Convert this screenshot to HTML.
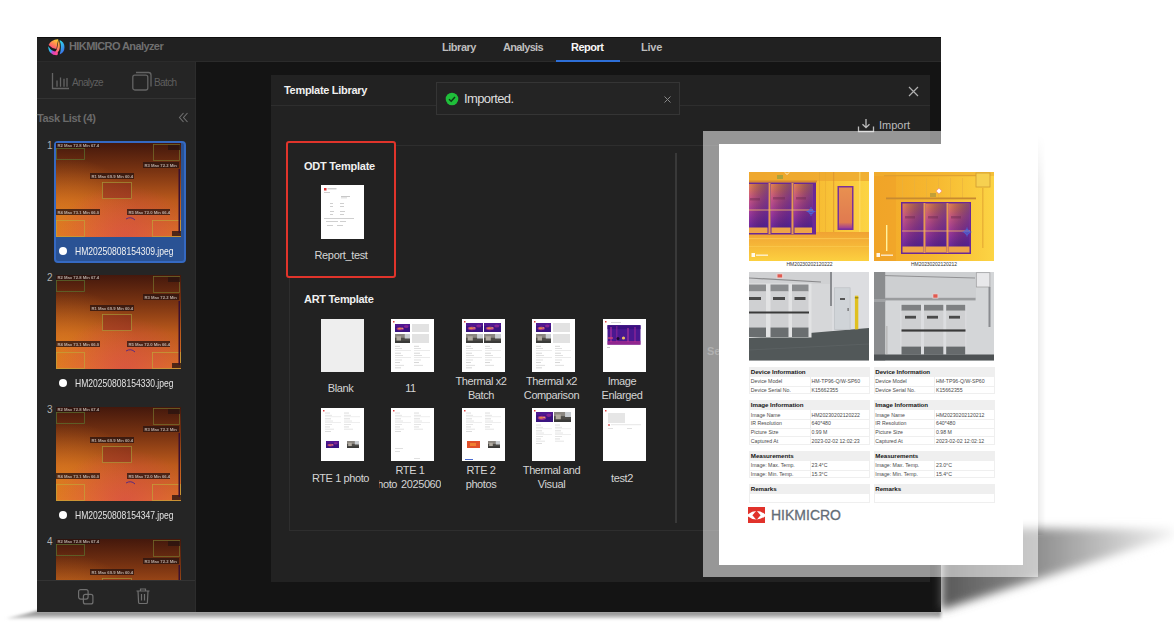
<!DOCTYPE html>
<html><head><meta charset="utf-8">
<style>
*{box-sizing:border-box;margin:0;padding:0}
html,body{width:1174px;height:641px;overflow:hidden;background:#fff}
body{position:relative;font-family:"Liberation Sans",sans-serif}
.a{position:absolute}
.t{position:absolute;white-space:nowrap;line-height:1}
.b{font-weight:bold}
.sx{transform-origin:0 50%}
.thumb{position:absolute;width:43px;height:53px;background:#fff;overflow:hidden}
.lbl{position:absolute;width:62px;text-align:center;font-size:11px;color:#d4d4d4;line-height:14px;overflow:hidden;white-space:nowrap;letter-spacing:-0.4px}
</style></head><body>

<!-- shadow under app window -->
<svg class="a" style="left:0;top:590px" width="1174" height="51">
 <defs><filter id="bl1" x="-5%" y="-100%" width="110%" height="300%"><feGaussianBlur stdDeviation="1.6"/></filter>
 <linearGradient id="sh1" x1="0" y1="0" x2="0" y2="1"><stop offset="0" stop-color="#767676"/><stop offset="1" stop-color="#d4d4d4"/></linearGradient></defs>
 <polygon points="6,28.5 37,21 941,21 941,28.5" fill="url(#sh1)" filter="url(#bl1)"/>
</svg>
<!-- APP WINDOW BG -->
<div class="a" style="left:37px;top:37px;width:904px;height:575px;background:#141414"></div>
<!-- title bar -->
<div class="a" style="left:37px;top:37px;width:904px;height:25px;background:#212121;border-top:1px solid #0f0f0f;border-bottom:1px solid #2b2b2b"></div>
<!-- logo -->
<svg class="a" style="left:45px;top:36px" width="22" height="22" viewBox="0 0 22 22">
 <defs>
  <linearGradient id="lgA" x1="0.8" y1="0" x2="0.2" y2="1"><stop offset="0" stop-color="#ffd030"/><stop offset="0.45" stop-color="#ff8a50"/><stop offset="1" stop-color="#ff3a8a"/></linearGradient>
  <linearGradient id="lgB" x1="0" y1="0" x2="0.3" y2="1"><stop offset="0" stop-color="#30e8f0"/><stop offset="1" stop-color="#3a70e8"/></linearGradient>
  <linearGradient id="lgC" x1="0" y1="0" x2="1" y2="0.5"><stop offset="0" stop-color="#30d8f0"/><stop offset="0.4" stop-color="#3aa8f0"/><stop offset="0.65" stop-color="#d040c8"/><stop offset="1" stop-color="#ff4a90"/></linearGradient>
  <linearGradient id="lgD" x1="0" y1="0" x2="0" y2="1"><stop offset="0" stop-color="#ffc030"/><stop offset="0.5" stop-color="#ff9050"/><stop offset="1" stop-color="#ff4a90"/></linearGradient>
 </defs>
 <circle cx="11.2" cy="11.3" r="7.9" fill="#1c1c1c"/>
 <path d="M14.6,3.9 A7.9,7.9 0 0 1 14.6,18.5 Q17.2,11.3 14.6,3.9Z" fill="url(#lgB)"/>
 <path d="M13.9,3.4 Q15.6,11 14.2,14.2 Q12,18.5 7.5,18.4 Q11.8,15 12.3,11.5 Q13,6.5 13.9,3.4Z" fill="url(#lgD)"/>
 <path d="M3.6,9 Q5.5,4 13.2,3.3 L11.4,13 Q6.5,12.2 3.6,9Z" fill="url(#lgA)"/>
 <path d="M3.4,10.3 A7.9,7.9 0 0 0 12.5,19.1 Q13.5,17.2 12.2,15.6 Q6.5,16 3.4,10.3Z" fill="url(#lgC)"/>
</svg>
<div class="t b" style="left:69px;top:41px;font-size:11px;color:#6f6f6f;letter-spacing:-0.59px">HIKMICRO Analyzer</div>
<!-- nav tabs -->
<div class="t b" style="left:442px;top:42px;font-size:11px;color:#bdbdbd;letter-spacing:-0.47px">Library</div>
<div class="t b" style="left:503px;top:42px;font-size:11px;color:#bdbdbd;letter-spacing:-0.66px">Analysis</div>
<div class="t b" style="left:571px;top:42px;font-size:11px;color:#f8f8f8;letter-spacing:-0.49px">Report</div>
<div class="t b" style="left:641px;top:42px;font-size:11px;color:#bdbdbd;letter-spacing:-0.25px">Live</div>
<div class="a" style="left:556px;top:60px;width:64px;height:2px;background:#2d6ed6"></div>

<!-- SIDEBAR -->
<div class="a" style="left:37px;top:62px;width:159px;height:550px;background:#252525;border-right:1px solid #2c2c2c"></div>
<div class="a" style="left:37px;top:98px;width:159px;height:1px;background:#333"></div>
<!-- analyze icon -->
<svg class="a" style="left:51px;top:72px" width="20" height="18" viewBox="0 0 20 18" fill="none" stroke="#646464" stroke-width="1.3">
 <path d="M1.5,1 V16.5 H18"/>
 <path d="M6,8.5 V14.8 M9.5,5.5 V14.8 M13,6.7 V14.8 M16,6 V14.8"/>
</svg>
<div class="t" style="left:72px;top:77.5px;font-size:10px;color:#5f5f5f;letter-spacing:-0.65px">Analyze</div>
<!-- batch icon -->
<svg class="a" style="left:131px;top:71px" width="22" height="21" viewBox="0 0 22 21" fill="none" stroke="#646464" stroke-width="1.3">
 <rect x="1.8" y="4.2" width="15" height="14.8" rx="2"/>
 <path d="M5,1.5 H17.5 Q20,1.5 20,4 V15.5"/>
</svg>
<div class="t" style="left:154px;top:77.5px;font-size:10px;color:#5f5f5f;letter-spacing:-0.6px">Batch</div>
<div class="t b" style="left:37px;top:113px;font-size:11px;color:#6a6a6a;letter-spacing:-0.38px">Task List (4)</div>
<svg class="a" style="left:178px;top:112px" width="11" height="11" viewBox="0 0 11 11" fill="none" stroke="#707070" stroke-width="1.1">
 <path d="M5.5,1 L1.5,5.5 L5.5,10 M9.5,1 L5.5,5.5 L9.5,10"/>
</svg>
<!-- thermal symbol defs -->
<svg class="a" width="0" height="0" style="left:0;top:0">
 <defs>
  <linearGradient id="thg" x1="0" y1="0" x2="0" y2="1">
   <stop offset="0" stop-color="#44180c"/>
   <stop offset="0.3" stop-color="#7a3412"/>
   <stop offset="0.62" stop-color="#bc5a1c"/>
   <stop offset="1" stop-color="#dc7424"/>
  </linearGradient>
  <radialGradient id="thp" cx="0.55" cy="1" r="0.55">
   <stop offset="0" stop-color="#d84450" stop-opacity="0.6"/>
   <stop offset="1" stop-color="#e23c62" stop-opacity="0"/>
  </radialGradient>
  <radialGradient id="tho" cx="0.05" cy="0.75" r="0.6">
   <stop offset="0" stop-color="#e88a20" stop-opacity="0.55"/>
   <stop offset="1" stop-color="#f08a20" stop-opacity="0"/>
  </radialGradient>
  <symbol id="therm" viewBox="0 0 125 94">
   <rect width="125" height="94" fill="url(#thg)"/>
   <rect width="125" height="94" fill="url(#tho)"/>
   <rect width="125" height="94" fill="url(#thp)"/>
   <g fill="none" stroke="#a49a3c" stroke-width="0.8" opacity="0.8">
    <rect x="0.5" y="5.5" width="28" height="11" stroke="#5a7a34"/>
    <rect x="97.5" y="1.5" width="26" height="16" stroke="#7a7a30"/>
    <rect x="46.5" y="39.5" width="29" height="16"/>
    <rect x="0.5" y="77.5" width="28" height="16" stroke="#c0a83a"/>
    <rect x="96.5" y="77.5" width="28" height="16" stroke="#c0a83a"/>
   </g>
   <rect x="47" y="40" width="28" height="15" fill="#8a2a20" opacity="0.5"/>
   <g fill="#2a1410" opacity="0.78">
    <rect x="0" y="0" width="44" height="5"/>
    <rect x="112" y="2" width="12" height="5"/>
    <rect x="87" y="19" width="36" height="6"/>
    <rect x="34" y="30" width="44" height="6"/>
    <rect x="0" y="66" width="44" height="6"/>
    <rect x="71" y="66" width="43" height="6"/>
    <rect x="116" y="88" width="9" height="5"/>
   </g>
   <g fill="#e8e0d8" opacity="0.7" font-family="Liberation Sans" font-size="4.2" font-weight="bold">
    <text x="1.5" y="4.2">R2 Max 72.8 Min 67.4</text>
    <text x="88.5" y="23.8">R3 Max 72.2 Min</text>
    <text x="35.5" y="34.8">R1 Max 69.9 Min 60.4</text>
    <text x="1.5" y="70.8">R4 Max 73.1 Min 66.0</text>
    <text x="72.5" y="70.8">R5 Max 72.0 Min 66.4</text>
   </g>
   <rect x="122.5" y="26" width="1.5" height="64" fill="#3a1030"/>
   <path d="M70,76 Q75,73 79,77" stroke="#5a2a80" stroke-width="1" fill="none"/>
  </symbol>
 </defs>
</svg>

<!-- sidebar list (clipped) -->
<div class="a" style="left:37px;top:136px;width:158px;height:444px;overflow:hidden">
 <!-- card 1 selected -->
 <div class="a" style="left:16.5px;top:4.5px;width:132px;height:122.5px;border:2px solid #3569c2;border-radius:4px;background:#2a5294"></div>
 <svg class="a" style="left:19px;top:7px" width="125" height="94"><use href="#therm"/></svg>
 <div class="t" style="left:10px;top:5px;font-size:10px;color:#b0b0b0">1</div>
 <div class="a" style="left:22px;top:111px;width:8px;height:8px;border-radius:50%;background:#fff"></div>
 <div class="t sx" style="left:38px;top:110px;font-size:10.5px;color:#f2f2f2;transform:scaleX(0.815)">HM20250808154309.jpeg</div>

 <!-- card 2 -->
 <svg class="a" style="left:19px;top:139px" width="125" height="94"><use href="#therm"/></svg>
 <div class="t" style="left:10px;top:137px;font-size:10px;color:#b0b0b0">2</div>
 <div class="a" style="left:22px;top:242.5px;width:8px;height:8px;border-radius:50%;background:#fff"></div>
 <div class="t sx" style="left:38px;top:241.5px;font-size:10.5px;color:#e4e4e4;transform:scaleX(0.815)">HM20250808154330.jpeg</div>

 <!-- card 3 -->
 <svg class="a" style="left:19px;top:271px" width="125" height="94"><use href="#therm"/></svg>
 <div class="t" style="left:10px;top:269px;font-size:10px;color:#b0b0b0">3</div>
 <div class="a" style="left:22px;top:374.5px;width:8px;height:8px;border-radius:50%;background:#fff"></div>
 <div class="t sx" style="left:38px;top:373.5px;font-size:10.5px;color:#e4e4e4;transform:scaleX(0.815)">HM20250808154347.jpeg</div>

 <!-- card 4 -->
 <svg class="a" style="left:19px;top:403px" width="125" height="94"><use href="#therm"/></svg>
 <div class="t" style="left:10px;top:401px;font-size:10px;color:#b0b0b0">4</div>
</div>
<!-- sidebar bottom bar -->
<div class="a" style="left:37px;top:580px;width:158px;height:1px;background:#333"></div>
<svg class="a" style="left:76.5px;top:587.5px" width="18" height="18" viewBox="0 0 18 18" fill="none" stroke="#707070" stroke-width="1.2">
 <rect x="1.6" y="1.6" width="9.5" height="9.5" rx="2"/>
 <rect x="6.4" y="6.4" width="9.5" height="9.5" rx="2"/>
</svg>
<svg class="a" style="left:135px;top:587px" width="16" height="18" viewBox="0 0 16 18" fill="none" stroke="#707070" stroke-width="1.2">
 <path d="M1.5,4 H14.5 M5.5,4 V2 H10.5 V4 M3,4 L3.6,15.5 Q3.7,16.5 4.7,16.5 H11.3 Q12.3,16.5 12.4,15.5 L13,4 M6.5,7 V13.5 M9.5,7 V13.5"/>
</svg>
<!-- MODAL -->
<div class="a" style="left:271px;top:75px;width:659px;height:507px;background:#222"></div>
<div class="a" style="left:271px;top:105px;width:659px;height:1px;background:#2e2e2e"></div>
<div class="t b" style="left:284px;top:85px;font-size:11px;color:#f0f0f0;letter-spacing:-0.3px">Template Library</div>
<svg class="a" style="left:908px;top:86px" width="11" height="11" viewBox="0 0 11 11" stroke="#b0b0b0" stroke-width="1.2"><path d="M1,1 L10,10 M10,1 L1,10"/></svg>
<!-- toast -->
<div class="a" style="left:436px;top:82px;width:244px;height:32.5px;background:#242424;border:1px solid #353535"></div>
<svg class="a" style="left:445px;top:92px" width="14" height="14" viewBox="0 0 14 14">
 <circle cx="7" cy="7" r="6.3" fill="#1fbf3a"/>
 <path d="M4,7.2 L6.2,9.2 L10,5" stroke="#0e3a16" stroke-width="1.5" fill="none"/>
</svg>
<div class="t" style="left:464px;top:92px;font-size:13px;color:#dedede;letter-spacing:-0.61px">Imported.</div>
<svg class="a" style="left:663.5px;top:95.5px" width="7" height="7" viewBox="0 0 7 7" stroke="#888" stroke-width="1"><path d="M0.5,0.5 L6.5,6.5 M6.5,0.5 L0.5,6.5"/></svg>
<!-- import -->
<svg class="a" style="left:857px;top:118px" width="18" height="15" viewBox="0 0 18 15" fill="none" stroke="#bdbdbd" stroke-width="1.3">
 <path d="M9,1 V9.5 M5.5,6.2 L9,9.6 L12.5,6.2 M1.5,8.5 V13.5 H16.5 V8.5"/>
</svg>
<div class="t" style="left:879px;top:120px;font-size:11px;color:#bcbcbc">Import</div>

<!-- inner frame lines -->
<div class="a" style="left:289px;top:145px;width:641px;height:386px;border-left:1px solid #2e2e2e;border-top:1px solid #2e2e2e;border-bottom:1px solid #2e2e2e"></div>
<div class="a" style="left:675px;top:153px;width:1.5px;height:370px;background:#393939"></div>

<!-- ODT -->
<div class="a" style="left:286px;top:140.5px;width:110px;height:137px;border:2px solid #e0342b;border-radius:3px;background:#222"></div>
<div class="t b" style="left:304px;top:161px;font-size:11px;color:#f0f0f0;letter-spacing:-0.23px">ODT Template</div>
<div class="thumb" style="left:321px;top:185px;width:43px;height:54px">
 <svg width="43" height="54" viewBox="0 0 43 54">
  <rect x="3" y="3" width="2.5" height="2.5" fill="#d33"/>
  <g fill="#bbb"><rect x="6.5" y="3.3" width="9" height="1"/><rect x="3" y="7" width="6" height="0.7"/><rect x="20" y="11" width="9" height="0.8"/><rect x="20" y="12.6" width="6" height="0.6"/>
  <rect x="9" y="18" width="3" height="0.7"/><rect x="19" y="18" width="4" height="0.7"/><rect x="9" y="21" width="3" height="0.7"/><rect x="19" y="21" width="4" height="0.7"/>
  <rect x="9" y="26" width="4" height="0.7"/><rect x="19" y="26" width="5" height="0.7"/><rect x="9" y="29" width="3" height="0.7"/><rect x="19" y="29" width="4" height="0.7"/>
  <rect x="3" y="33" width="30" height="0.7"/><rect x="5" y="36" width="12" height="0.7"/><rect x="19" y="36" width="6" height="0.7"/>
  <rect x="6" y="40" width="6" height="0.7"/><rect x="16" y="40" width="6" height="0.7"/></g>
 </svg>
</div>
<div class="t" style="left:314.5px;top:249.5px;font-size:11px;color:#d6d6d6;letter-spacing:-0.35px">Report_test</div>

<!-- ART -->
<div class="t b" style="left:304px;top:294px;font-size:11px;color:#f0f0f0;letter-spacing:-0.3px">ART Template</div>
<svg class="a" width="0" height="0" style="left:0;top:0">
 <defs>
  <linearGradient id="pg" x1="0" y1="0" x2="1" y2="1">
   <stop offset="0" stop-color="#4a1890"/><stop offset="0.5" stop-color="#8a2aa8"/><stop offset="1" stop-color="#3a1280"/>
  </linearGradient>
  <symbol id="pth" viewBox="0 0 20 12" preserveAspectRatio="none">
   <rect width="20" height="12" fill="#3a1480"/>
   <rect x="0" y="0" width="20" height="4" fill="#5a1a98" opacity="0.7"/>
   <ellipse cx="7" cy="7" rx="5" ry="2.5" fill="#c03a90" opacity="0.75"/>
   <ellipse cx="15" cy="4" rx="3" ry="2" fill="#a02a98" opacity="0.7"/>
   <ellipse cx="6" cy="7" rx="2.5" ry="1.2" fill="#f09040" opacity="0.85"/>
   <circle cx="9.5" cy="6.5" r="0.9" fill="#ffd060"/>
  </symbol>
  <symbol id="vis" viewBox="0 0 20 12" preserveAspectRatio="none">
   <rect width="20" height="12" fill="#4e4c48"/>
   <rect x="0" y="0" width="20" height="5" fill="#8a8680"/>
   <rect x="13" y="0" width="7" height="6" fill="#c8ccd0"/>
   <rect x="2" y="3" width="6" height="6" fill="#b0aaa0"/>
   <rect x="0" y="9" width="20" height="3" fill="#3a3a38"/>
  </symbol>
  <symbol id="lines" viewBox="0 0 43 30" preserveAspectRatio="none">
   <g fill="#c4c4c4">
    <rect x="4" y="1" width="5" height="0.8"/><rect x="23" y="1" width="5" height="0.8"/>
    <rect x="4" y="4" width="7" height="0.6"/><rect x="23" y="4" width="7" height="0.6"/>
    <rect x="4" y="6.5" width="16" height="0.4"/><rect x="23" y="6.5" width="16" height="0.4"/>
    <rect x="4" y="9" width="6" height="0.8"/><rect x="23" y="9" width="6" height="0.8"/>
    <rect x="4" y="12" width="8" height="0.6"/><rect x="23" y="12" width="8" height="0.6"/>
    <rect x="4" y="14.5" width="16" height="0.4"/><rect x="23" y="14.5" width="16" height="0.4"/>
    <rect x="4" y="17" width="7" height="0.6"/><rect x="23" y="17" width="7" height="0.6"/>
    <rect x="4" y="20" width="5" height="0.8"/><rect x="23" y="20" width="5" height="0.8"/>
    <rect x="4" y="23" width="9" height="0.6"/><rect x="23" y="23" width="9" height="0.6"/>
    <rect x="4" y="26" width="6" height="0.8"/>
   </g>
  </symbol>
 </defs>
</svg>
<!-- row 1 -->
<div class="thumb" style="left:321px;top:319px;background:#eeeeee"></div>
<div class="thumb" style="left:391px;top:319px"><svg width="43" height="53">
 <rect x="2" y="2" width="1.5" height="1.5" fill="#d44"/>
 <svg x="4" y="5" width="15" height="8"><use href="#pth"/></svg><rect x="21" y="5" width="17" height="8" fill="#e2e2e2"/>
 <svg x="4" y="15" width="15" height="9"><use href="#vis"/></svg><rect x="21" y="15" width="17" height="9" fill="#e2e2e2"/>
 <svg x="0" y="26" width="43" height="26"><use href="#lines"/></svg></svg></div>
<div class="thumb" style="left:461.5px;top:319px"><svg width="43" height="53">
 <rect x="2" y="2" width="1.5" height="1.5" fill="#d44"/>
 <svg x="4" y="4" width="17" height="9"><use href="#pth"/></svg><svg x="22" y="4" width="17" height="9"><use href="#pth"/></svg>
 <svg x="4" y="15" width="17" height="9"><use href="#vis"/></svg><svg x="22" y="15" width="17" height="9"><use href="#vis"/></svg>
 <svg x="0" y="26" width="43" height="26"><use href="#lines"/></svg></svg></div>
<div class="thumb" style="left:532px;top:319px"><svg width="43" height="53">
 <rect x="2" y="2" width="1.5" height="1.5" fill="#d44"/>
 <svg x="4" y="4" width="15" height="9"><use href="#pth"/></svg><rect x="21" y="4" width="17" height="9" fill="#e2e2e2"/>
 <svg x="4" y="15" width="15" height="9"><use href="#vis"/></svg><rect x="21" y="15" width="17" height="9" fill="#e2e2e2"/>
 <svg x="0" y="26" width="43" height="26"><use href="#lines"/></svg></svg></div>
<div class="thumb" style="left:602.5px;top:319px"><svg width="43" height="53">
 <rect x="2" y="2" width="1.5" height="1.5" fill="#d44"/><rect x="8" y="3" width="10" height="0.6" fill="#bbb"/>
 <rect x="4.5" y="6.2" width="33" height="19.5" fill="#4a1890"/>
 <rect x="4.5" y="6.2" width="33" height="4" fill="#3a1080"/>
 <rect x="7" y="8" width="2" height="15" fill="#b030a0" opacity="0.6"/><rect x="13" y="7" width="1.5" height="16" fill="#a02898" opacity="0.5"/><rect x="24" y="9" width="2" height="14" fill="#b83aa0" opacity="0.5"/><rect x="31" y="8" width="2" height="15" fill="#a02898" opacity="0.5"/>
 <rect x="4.5" y="22" width="33" height="3.7" fill="#c03090" opacity="0.6"/>
 <circle cx="20.5" cy="19" r="1.6" fill="#f0c060"/><circle cx="15" cy="19.5" r="1.5" fill="#1a0a30"/><rect x="5" y="18" width="5" height="2" fill="#e04a70" opacity="0.6"/>
 <rect x="4" y="28" width="3" height="0.8" fill="#bbb"/></svg></div>
<div class="lbl" style="left:309.5px;top:381px">Blank</div>
<div class="lbl" style="left:379.5px;top:381px">11</div>
<div class="lbl" style="left:450.0px;top:374px">Thermal x2<br>Batch</div>
<div class="lbl" style="left:520.5px;top:374px">Thermal x2<br>Comparison</div>
<div class="lbl" style="left:591.0px;top:374px">Image<br>Enlarged</div>
<!-- row 2 -->
<div class="thumb" style="left:321px;top:408px"><svg width="43" height="53">
 <rect x="2" y="2" width="1.5" height="1.5" fill="#d44"/>
 <svg x="0" y="4" width="43" height="22"><use href="#lines"/></svg>
 <svg x="5" y="33" width="13" height="7"><use href="#pth"/></svg><svg x="26" y="33" width="12" height="7"><use href="#vis"/></svg></svg></div>
<div class="thumb" style="left:391px;top:408px"><svg width="43" height="53">
 <rect x="2" y="2" width="1.5" height="1.5" fill="#d44"/>
 <svg x="0" y="4" width="43" height="22"><use href="#lines"/></svg>
 <rect x="4" y="40" width="8" height="0.6" fill="#ccc"/><rect x="4" y="43" width="5" height="0.6" fill="#ccc"/><rect x="23" y="50" width="6" height="0.6" fill="#ccc"/></svg></div>
<div class="thumb" style="left:461.5px;top:408px"><svg width="43" height="53">
 <rect x="2" y="2" width="1.5" height="1.5" fill="#d44"/>
 <svg x="0" y="4" width="43" height="22"><use href="#lines"/></svg>
 <rect x="5" y="33" width="13" height="7" fill="#e0502a"/><rect x="8" y="35" width="6" height="3" fill="#f08030"/><svg x="26" y="33" width="12" height="7"><use href="#vis"/></svg>
 <rect x="3" y="51" width="8" height="1" fill="#4a6ad0"/></svg></div>
<div class="thumb" style="left:532px;top:408px"><svg width="43" height="53">
 <rect x="2" y="2" width="1.5" height="1.5" fill="#d44"/>
 <svg x="4" y="4" width="17" height="10"><use href="#pth"/></svg><svg x="22" y="4" width="17" height="10"><use href="#vis"/></svg>
 <svg x="0" y="16" width="43" height="22"><use href="#lines"/></svg></svg></div>
<div class="thumb" style="left:602.5px;top:408px"><svg width="43" height="53">
 <rect x="2" y="2" width="1.5" height="1.5" fill="#d44"/>
 <rect x="5" y="5" width="17" height="10" fill="#e6e6e6"/>
 <circle cx="6" cy="17" r="1" fill="#d66"/><rect x="8" y="16.6" width="30" height="0.5" fill="#ccc"/>
 <rect x="5" y="20" width="5" height="0.6" fill="#ccc"/><rect x="24" y="20" width="5" height="0.6" fill="#ccc"/></svg></div>
<div class="lbl" style="left:309.5px;top:470.5px">RTE 1 photo</div>
<div class="lbl" style="left:379.0px;top:463px">RTE 1<br><span style="display:inline-block;width:120px;margin-left:-7.5px;text-align:left;padding-left:0">photo<span style="margin-left:4px">20250604</span></span></div>
<div class="lbl" style="left:450.0px;top:463px">RTE 2<br>photos</div>
<div class="lbl" style="left:520.5px;top:463px">Thermal and<br>Visual</div>
<div class="lbl" style="left:591.0px;top:470.5px">test2</div>
<!-- DOCUMENT OVERLAY SHADOW -->
<svg class="a" style="left:880px;top:480px" width="294" height="161">
 <defs><filter id="bl2" x="-30%" y="-50%" width="160%" height="200%"><feGaussianBlur stdDeviation="5"/></filter>
 <linearGradient id="shg" x1="0" y1="0" x2="1" y2="0"><stop offset="0" stop-color="#585858"/><stop offset="0.35" stop-color="#848484"/><stop offset="0.75" stop-color="#c8c8c8"/><stop offset="1" stop-color="#f4f4f4"/></linearGradient></defs>
 <polygon points="61,48 294,49 294,56 61,130" fill="url(#shg)" filter="url(#bl2)"/>
</svg>
<div class="t b" style="left:707px;top:346px;font-size:11px;color:#5a5a5a">Se</div>
<div class="a" style="left:1038px;top:135px;width:8px;height:400px;background:linear-gradient(90deg,rgba(0,0,0,0.07),rgba(0,0,0,0));-webkit-mask-image:linear-gradient(180deg,transparent 0,#000 50px,#000 100%)"></div>
<!-- frame -->
<div class="a" style="left:703px;top:131px;width:335px;height:446px;background:rgba(255,255,255,0.53)"></div>
<!-- page -->
<div class="a" id="page" style="left:719px;top:144px;width:304px;height:421px;background:#fff;overflow:hidden"><div class="a" style="left:0;top:-1px;width:304px;height:422px">
 <svg class="a" style="left:0;top:0" width="0" height="0"><defs>
  <linearGradient id="dg" x1="0" y1="0" x2="0" y2="1"><stop offset="0" stop-color="#e48252"/><stop offset="0.3" stop-color="#cc5a84"/><stop offset="0.65" stop-color="#a03a9c"/><stop offset="1" stop-color="#6a28a0"/></linearGradient><linearGradient id="dg3" x1="0" y1="0" x2="0" y2="1"><stop offset="0" stop-color="#e89050"/><stop offset="0.85" stop-color="#e07a50"/><stop offset="1" stop-color="#9a3a9a"/></linearGradient>
  <linearGradient id="dg2" x1="0" y1="0" x2="1" y2="0"><stop offset="0" stop-color="#000" stop-opacity="0"/><stop offset="1" stop-color="#3a1a8a" stop-opacity="0.55"/></linearGradient>
  <linearGradient id="ybg" x1="0" y1="0" x2="1" y2="0"><stop offset="0" stop-color="#f2a828"/><stop offset="0.5" stop-color="#f6b830"/><stop offset="1" stop-color="#fcd444"/></linearGradient>
  <linearGradient id="flr" x1="0" y1="0" x2="0" y2="1"><stop offset="0" stop-color="#f0a232"/><stop offset="1" stop-color="#fcd040"/></linearGradient>
 </defs></svg>
 <!-- thermal 1 -->
 <svg class="a" style="left:30px;top:28.5px" width="120" height="89" viewBox="0 0 120 89">
  <rect width="120" height="89" fill="url(#ybg)"/>
  <rect x="0" y="0" width="120" height="9" fill="#eea830" opacity="0.8"/>
  <rect x="70" y="0" width="1" height="60" fill="#e0a030" opacity="0.6"/><rect x="76" y="0" width="1" height="60" fill="#e8a830" opacity="0.5"/><rect x="84" y="0" width="1.2" height="60" fill="#d89030" opacity="0.6"/><rect x="110" y="0" width="1.5" height="62" fill="#ffe070" opacity="0.6"/>
  <rect y="60" width="120" height="29" fill="url(#flr)"/>
  <rect x="0" y="66" width="120" height="1.2" fill="#ffd860" opacity="0.5"/><rect x="0" y="74" width="120" height="1" fill="#ffd860" opacity="0.4"/>
  <rect x="0" y="8.5" width="68" height="2" fill="#d88a30"/>
  <rect x="0" y="10.5" width="67" height="52" fill="#6a2896"/>
  <rect x="0" y="12" width="19" height="44" fill="url(#dg)"/><rect x="0" y="12" width="19" height="44" fill="url(#dg2)"/>
  <rect x="22" y="12" width="20" height="44" fill="url(#dg)"/><rect x="22" y="12" width="20" height="44" fill="url(#dg2)"/>
  <rect x="45" y="12" width="18.5" height="44" fill="url(#dg)"/><rect x="45" y="12" width="18.5" height="44" fill="url(#dg2)"/>
  <rect x="19.5" y="11" width="2" height="51" fill="#e89850"/><rect x="42.5" y="11" width="2" height="51" fill="#e89850"/>
  <rect x="0" y="37.5" width="64" height="1" fill="#f0b070" opacity="0.85"/>
  <rect x="0" y="55.5" width="18.5" height="5.5" fill="#eea448"/><rect x="22.5" y="55.5" width="19" height="5.5" fill="#eea448"/><rect x="45.5" y="55.5" width="17.5" height="5.5" fill="#eea448"/>
  <rect x="1" y="26" width="10" height="2.5" fill="#6a2a50" opacity="0.45"/><rect x="24" y="25" width="12" height="2.5" fill="#6a2a50" opacity="0.45"/><rect x="47" y="25" width="10" height="2.5" fill="#6a2a50" opacity="0.45"/>
  <rect x="88.5" y="14" width="16" height="44" fill="#7a3098"/><rect x="90" y="15.5" width="13" height="41" fill="url(#dg3)"/>
  <circle cx="62" cy="39.5" r="2.3" fill="none" stroke="#4a6ae0" stroke-width="1"/><path d="M57.5,39.5 H66.5 M62,35 V44" stroke="#4a6ae0" stroke-width="0.8"/>
  <rect x="28" y="3" width="6" height="4" fill="#90a040" opacity="0.7"/><path d="M36,0.5 L38,2.5 L40,0.5" stroke="#fff" stroke-width="0.8" fill="none"/>
  <rect x="2.5" y="81" width="3.5" height="4" fill="#fff" opacity="0.9"/><rect x="7" y="82.5" width="12" height="1.4" fill="#fff" opacity="0.75"/>
 </svg>
 <!-- thermal 2 -->
 <svg class="a" style="left:154.5px;top:28.5px" width="120" height="89" viewBox="0 0 120 89">
  <rect width="120" height="89" fill="url(#ybg)"/>
  <rect x="0" y="0" width="22" height="89" fill="#eea028" opacity="0.55"/>
  <rect x="0" y="0" width="120" height="4" fill="#f0b030" opacity="0.6"/>
  <rect x="10" y="3" width="95" height="1.2" fill="#d89a30" opacity="0.7"/>
  <rect x="28" y="6" width="1" height="20" fill="#e8b040" opacity="0.6"/><rect x="40" y="6" width="1" height="20" fill="#e8b040" opacity="0.6"/><rect x="52" y="6" width="1" height="20" fill="#e8b040" opacity="0.6"/><rect x="64" y="6" width="1" height="20" fill="#e8b040" opacity="0.6"/><rect x="76" y="6" width="1" height="20" fill="#e8b040" opacity="0.6"/><rect x="88" y="6" width="1" height="20" fill="#e8b040" opacity="0.6"/>
  <rect x="12" y="25.5" width="90" height="1.8" fill="#c88a30"/>
  <rect x="102" y="1" width="14" height="14" fill="#f6d050" stroke="#d09a30" stroke-width="0.8"/>
  <rect x="108" y="16" width="1.5" height="60" fill="#e0a030" opacity="0.6"/>
  <rect x="27" y="30" width="70" height="52" fill="#6a2896"/>
  <rect x="28.5" y="31.5" width="21" height="44" fill="url(#dg)"/><rect x="28.5" y="31.5" width="21" height="44" fill="url(#dg2)"/>
  <rect x="51.5" y="31.5" width="21" height="44" fill="url(#dg)"/><rect x="51.5" y="31.5" width="21" height="44" fill="url(#dg2)"/>
  <rect x="74.5" y="31.5" width="21" height="44" fill="url(#dg)"/><rect x="74.5" y="31.5" width="21" height="44" fill="url(#dg2)"/>
  <rect x="49.5" y="31" width="2" height="50" fill="#e89850"/><rect x="72.5" y="31" width="2" height="50" fill="#e89850"/>
  <rect x="28" y="58.5" width="68" height="1" fill="#f0b070" opacity="0.85"/>
  <rect x="28.5" y="74.5" width="21" height="6" fill="#eea448"/><rect x="51.5" y="74.5" width="21" height="6" fill="#eea448"/><rect x="74.5" y="74.5" width="21" height="6" fill="#eea448"/>
  <rect x="31" y="44" width="10" height="2.5" fill="#6a2a50" opacity="0.45"/><rect x="54" y="44" width="10" height="2.5" fill="#6a2a50" opacity="0.45"/><rect x="77" y="44" width="10" height="2.5" fill="#6a2a50" opacity="0.45"/>
  <rect x="12" y="53" width="1.4" height="26" fill="#fff2a0"/>
  <rect x="56" y="21" width="6" height="4" fill="#a09040" opacity="0.6"/><rect x="63" y="17" width="4" height="4" fill="#fff" stroke="#f08080" stroke-width="0.6" transform="rotate(45 65 19)"/>
  <circle cx="93" cy="60" r="2.3" fill="none" stroke="#4a6ae0" stroke-width="1"/><path d="M88.5,60 H97.5 M93,55.5 V64.5" stroke="#4a6ae0" stroke-width="0.8"/>
  <rect x="2.5" y="81" width="3.5" height="4" fill="#fff" opacity="0.9"/><rect x="7" y="82.5" width="12" height="1.4" fill="#fff" opacity="0.75"/>
 </svg>
 <div class="t" style="left:67.5px;top:119px;font-size:5px;color:#333;letter-spacing:-0.05px">HM20230202120222</div>
 <div class="t" style="left:192px;top:119px;font-size:5px;color:#333;letter-spacing:-0.05px">HM20230202120212</div>
 <!-- visual 1 -->
 <svg class="a" style="left:30px;top:129px" width="120" height="88.5" viewBox="0 0 120 88.5">
  <rect width="120" height="88.5" fill="#d6d7d9"/>
  <rect x="0" y="0" width="82" height="12" fill="#d0d1d3"/>
  <rect x="83" y="0" width="37" height="60" fill="#dcdde0"/>
  <path d="M0,66 L120,56 V88.5 H0Z" fill="#525859"/>
  <path d="M0,78 L120,72" stroke="#5e6466" stroke-width="0.7"/>
  <path d="M0,6 L72,10" stroke="#8a8a8c" stroke-width="1.2"/>
  <rect x="27.3" y="1.4" width="7" height="5" fill="#e8d0d0"/><rect x="28.5" y="2.3" width="4.6" height="3.2" fill="#e05a50"/>
  <rect x="81" y="0" width="2" height="34" fill="#8a8c90"/>
  <rect x="0" y="11.5" width="62.5" height="54" fill="#e2e3e4"/>
  <rect x="0" y="12.5" width="17" height="7" fill="#8a8c8e"/><rect x="21.5" y="12.5" width="18" height="7" fill="#8a8c8e"/><rect x="43" y="12.5" width="16.5" height="7" fill="#8a8c8e"/>
  <rect x="0" y="19.5" width="17" height="36" fill="#cfd0d2"/><rect x="21.5" y="19.5" width="18" height="36" fill="#cfd0d2"/><rect x="43" y="19.5" width="16.5" height="36" fill="#cfd0d2"/>
  <rect x="0" y="55.5" width="17" height="9.5" fill="#6a6e70"/><rect x="21.5" y="55.5" width="18" height="9.5" fill="#6a6e70"/><rect x="43" y="55.5" width="16.5" height="9.5" fill="#6a6e70"/>
  <rect x="0" y="25" width="12" height="3" fill="#4a4a4a"/><rect x="24" y="25" width="12" height="3" fill="#4a4a4a"/><rect x="45.5" y="25" width="11" height="3" fill="#4a4a4a"/>
  <rect x="0" y="39.5" width="60" height="2" fill="#3a3a3a"/>
  <rect x="85.4" y="15.8" width="15.7" height="41.6" fill="#d0d4d8" stroke="#b8bcc0" stroke-width="0.6"/>
  <rect x="91" y="26" width="5" height="2" fill="#555"/><rect x="98.5" y="36" width="1.2" height="3" fill="#666"/>
  <rect x="105.9" y="23.7" width="3.4" height="33.7" fill="#e0c020"/><rect x="105.9" y="25" width="3.4" height="1.5" fill="#a08a10"/>
 </svg>
 <!-- visual 2 -->
 <svg class="a" style="left:154.5px;top:129px" width="120" height="88.5" viewBox="0 0 120 88.5">
  <rect width="120" height="88.5" fill="#d4d6d8"/>
  <rect x="11" y="0" width="91" height="26" fill="#cdcfd1"/>
  <rect x="0" y="0" width="11.2" height="88.5" fill="#8a8c8e"/>
  <rect x="0" y="27" width="11.2" height="3" fill="#a0a2a4"/>
  <path d="M11,3.6 L101,6" stroke="#8a8a8c" stroke-width="0.9"/>
  <rect x="102.3" y="0.7" width="13.6" height="14.3" fill="#e8e8ea" stroke="#9a9a9c" stroke-width="0.7"/>
  <rect x="114.5" y="15" width="2" height="40" fill="#8a8c90"/>
  <rect x="11" y="25.8" width="90.6" height="2.6" fill="#9a9c9e"/>
  <rect x="58.5" y="21.5" width="5.8" height="5" fill="#e8d0d0"/><rect x="59.3" y="22.3" width="4.2" height="3.4" fill="#e05a50"/>
  <rect x="26.3" y="32.3" width="66" height="50.2" fill="#dcdde0"/>
  <rect x="27.5" y="32.8" width="19.5" height="6" fill="#7e8082"/><rect x="50" y="32.8" width="19.3" height="6" fill="#7e8082"/><rect x="72.2" y="32.8" width="19" height="6" fill="#7e8082"/>
  <rect x="27.5" y="38.7" width="19.5" height="36" fill="#cfd0d2"/><rect x="50" y="38.7" width="19.3" height="36" fill="#cfd0d2"/><rect x="72.2" y="38.7" width="19" height="36" fill="#cfd0d2"/>
  <rect x="27.5" y="74.6" width="19.5" height="8" fill="#666a6c"/><rect x="50" y="74.6" width="19.3" height="8" fill="#666a6c"/><rect x="72.2" y="74.6" width="19" height="8" fill="#666a6c"/>
  <rect x="31" y="43.8" width="11" height="2.8" fill="#4a4a4a"/><rect x="53" y="43.8" width="11" height="2.8" fill="#4a4a4a"/><rect x="75" y="43.8" width="11" height="2.8" fill="#4a4a4a"/>
  <rect x="27.5" y="57.4" width="64" height="2.2" fill="#3a3a3a"/>
  <rect x="0" y="82.5" width="120" height="6" fill="#4e5254"/>
  <rect x="12" y="54" width="1.6" height="28" fill="#bcbcbc"/>
 </svg>
 <!-- tables -->
 <div id="tl" class="a" style="left:30px;top:223.5px;width:121px"><div class="a" style="left:0;top:0.0px;width:121px;height:10.2px;background:#efefef"></div>
<div class="t b" style="left:1.8px;top:2.3px;font-size:6.2px;color:#151515;letter-spacing:-0.05px">Device Information</div>
<div class="a" style="left:0;top:10.2px;width:121px;height:17.7px;border:1px solid #efefef;border-top:none"></div>
<div class="a" style="left:60.5px;top:10.2px;width:1px;height:17.7px;background:#efefef"></div>
<div class="t" style="left:1.8px;top:12.8px;font-size:5.2px;color:#4a4a4a">Device Model</div>
<div class="t" style="left:62.5px;top:12.8px;font-size:5.2px;color:#4a4a4a">HM-TP96-Q/W-SP60</div>
<div class="a" style="left:0;top:19.0px;width:121px;height:1px;background:#efefef"></div>
<div class="t" style="left:1.8px;top:21.6px;font-size:5.2px;color:#4a4a4a">Device Serial No.</div>
<div class="t" style="left:62.5px;top:21.6px;font-size:5.2px;color:#4a4a4a">K15662355</div>
<div class="a" style="left:0;top:33.2px;width:121px;height:10.2px;background:#efefef"></div>
<div class="t b" style="left:1.8px;top:35.5px;font-size:6.2px;color:#151515;letter-spacing:-0.05px">Image Information</div>
<div class="a" style="left:0;top:43.4px;width:121px;height:35.4px;border:1px solid #efefef;border-top:none"></div>
<div class="a" style="left:60.5px;top:43.4px;width:1px;height:35.4px;background:#efefef"></div>
<div class="t" style="left:1.8px;top:46.0px;font-size:5.2px;color:#4a4a4a">Image Name</div>
<div class="t" style="left:62.5px;top:46.0px;font-size:5.2px;color:#4a4a4a">HM20230202120222</div>
<div class="a" style="left:0;top:52.2px;width:121px;height:1px;background:#efefef"></div>
<div class="t" style="left:1.8px;top:54.8px;font-size:5.2px;color:#4a4a4a">IR Resolution</div>
<div class="t" style="left:62.5px;top:54.8px;font-size:5.2px;color:#4a4a4a">640*480</div>
<div class="a" style="left:0;top:61.1px;width:121px;height:1px;background:#efefef"></div>
<div class="t" style="left:1.8px;top:63.7px;font-size:5.2px;color:#4a4a4a">Picture Size</div>
<div class="t" style="left:62.5px;top:63.7px;font-size:5.2px;color:#4a4a4a">0.99 M</div>
<div class="a" style="left:0;top:69.9px;width:121px;height:1px;background:#efefef"></div>
<div class="t" style="left:1.8px;top:72.5px;font-size:5.2px;color:#4a4a4a">Captured At</div>
<div class="t" style="left:62.5px;top:72.5px;font-size:5.2px;color:#4a4a4a">2023-02-02 12:02:23</div>
<div class="a" style="left:0;top:84.1px;width:121px;height:10.2px;background:#efefef"></div>
<div class="t b" style="left:1.8px;top:86.4px;font-size:6.2px;color:#151515;letter-spacing:-0.05px">Measurements</div>
<div class="a" style="left:0;top:94.3px;width:121px;height:17.7px;border:1px solid #efefef;border-top:none"></div>
<div class="a" style="left:60.5px;top:94.3px;width:1px;height:17.7px;background:#efefef"></div>
<div class="t" style="left:1.8px;top:96.9px;font-size:5.2px;color:#4a4a4a">Image: Max. Temp.</div>
<div class="t" style="left:62.5px;top:96.9px;font-size:5.2px;color:#4a4a4a">23.4°C</div>
<div class="a" style="left:0;top:103.1px;width:121px;height:1px;background:#efefef"></div>
<div class="t" style="left:1.8px;top:105.7px;font-size:5.2px;color:#4a4a4a">Image: Min. Temp.</div>
<div class="t" style="left:62.5px;top:105.7px;font-size:5.2px;color:#4a4a4a">15.3°C</div>
<div class="a" style="left:0;top:117.3px;width:121px;height:10.2px;background:#efefef"></div>
<div class="t b" style="left:1.8px;top:119.6px;font-size:6.2px;color:#151515;letter-spacing:-0.05px">Remarks</div>
<div class="a" style="left:0;top:127.5px;width:121px;height:8.8px;border:1px solid #efefef;border-top:none"></div></div>
 <div id="tr" class="a" style="left:154.5px;top:223.5px;width:121px"><div class="a" style="left:0;top:0.0px;width:121px;height:10.2px;background:#efefef"></div>
<div class="t b" style="left:1.8px;top:2.3px;font-size:6.2px;color:#151515;letter-spacing:-0.05px">Device Information</div>
<div class="a" style="left:0;top:10.2px;width:121px;height:17.7px;border:1px solid #efefef;border-top:none"></div>
<div class="a" style="left:60.5px;top:10.2px;width:1px;height:17.7px;background:#efefef"></div>
<div class="t" style="left:1.8px;top:12.8px;font-size:5.2px;color:#4a4a4a">Device Model</div>
<div class="t" style="left:62.5px;top:12.8px;font-size:5.2px;color:#4a4a4a">HM-TP96-Q/W-SP60</div>
<div class="a" style="left:0;top:19.0px;width:121px;height:1px;background:#efefef"></div>
<div class="t" style="left:1.8px;top:21.6px;font-size:5.2px;color:#4a4a4a">Device Serial No.</div>
<div class="t" style="left:62.5px;top:21.6px;font-size:5.2px;color:#4a4a4a">K15662355</div>
<div class="a" style="left:0;top:33.2px;width:121px;height:10.2px;background:#efefef"></div>
<div class="t b" style="left:1.8px;top:35.5px;font-size:6.2px;color:#151515;letter-spacing:-0.05px">Image Information</div>
<div class="a" style="left:0;top:43.4px;width:121px;height:35.4px;border:1px solid #efefef;border-top:none"></div>
<div class="a" style="left:60.5px;top:43.4px;width:1px;height:35.4px;background:#efefef"></div>
<div class="t" style="left:1.8px;top:46.0px;font-size:5.2px;color:#4a4a4a">Image Name</div>
<div class="t" style="left:62.5px;top:46.0px;font-size:5.2px;color:#4a4a4a">HM20230202120212</div>
<div class="a" style="left:0;top:52.2px;width:121px;height:1px;background:#efefef"></div>
<div class="t" style="left:1.8px;top:54.8px;font-size:5.2px;color:#4a4a4a">IR Resolution</div>
<div class="t" style="left:62.5px;top:54.8px;font-size:5.2px;color:#4a4a4a">640*480</div>
<div class="a" style="left:0;top:61.1px;width:121px;height:1px;background:#efefef"></div>
<div class="t" style="left:1.8px;top:63.7px;font-size:5.2px;color:#4a4a4a">Picture Size</div>
<div class="t" style="left:62.5px;top:63.7px;font-size:5.2px;color:#4a4a4a">0.98 M</div>
<div class="a" style="left:0;top:69.9px;width:121px;height:1px;background:#efefef"></div>
<div class="t" style="left:1.8px;top:72.5px;font-size:5.2px;color:#4a4a4a">Captured At</div>
<div class="t" style="left:62.5px;top:72.5px;font-size:5.2px;color:#4a4a4a">2023-02-02 12:02:12</div>
<div class="a" style="left:0;top:84.1px;width:121px;height:10.2px;background:#efefef"></div>
<div class="t b" style="left:1.8px;top:86.4px;font-size:6.2px;color:#151515;letter-spacing:-0.05px">Measurements</div>
<div class="a" style="left:0;top:94.3px;width:121px;height:17.7px;border:1px solid #efefef;border-top:none"></div>
<div class="a" style="left:60.5px;top:94.3px;width:1px;height:17.7px;background:#efefef"></div>
<div class="t" style="left:1.8px;top:96.9px;font-size:5.2px;color:#4a4a4a">Image: Max. Temp.</div>
<div class="t" style="left:62.5px;top:96.9px;font-size:5.2px;color:#4a4a4a">23.0°C</div>
<div class="a" style="left:0;top:103.1px;width:121px;height:1px;background:#efefef"></div>
<div class="t" style="left:1.8px;top:105.7px;font-size:5.2px;color:#4a4a4a">Image: Min. Temp.</div>
<div class="t" style="left:62.5px;top:105.7px;font-size:5.2px;color:#4a4a4a">15.4°C</div>
<div class="a" style="left:0;top:117.3px;width:121px;height:10.2px;background:#efefef"></div>
<div class="t b" style="left:1.8px;top:119.6px;font-size:6.2px;color:#151515;letter-spacing:-0.05px">Remarks</div>
<div class="a" style="left:0;top:127.5px;width:121px;height:8.8px;border:1px solid #efefef;border-top:none"></div></div>
 <!-- logo -->
 <svg class="a" style="left:29px;top:363.6px" width="17" height="16.6" viewBox="0 0 17 16.6">
  <rect width="17" height="16.6" fill="#e1322b"/>
  <path d="M0,7.2 Q8.5,0.8 17,7.2 V9.4 Q8.5,15.8 0,9.4Z" fill="#fff"/>
  <path d="M8.5,3.6 L12.6,8.3 L8.5,13 L4.4,8.3Z" fill="#e1322b"/>
 </svg>
 <div class="t" style="left:52px;top:365px;font-size:14px;color:#646d76;letter-spacing:0px;-webkit-text-stroke:0.3px #646d76">HIKMICRO</div>
</div></div>
</body></html>
